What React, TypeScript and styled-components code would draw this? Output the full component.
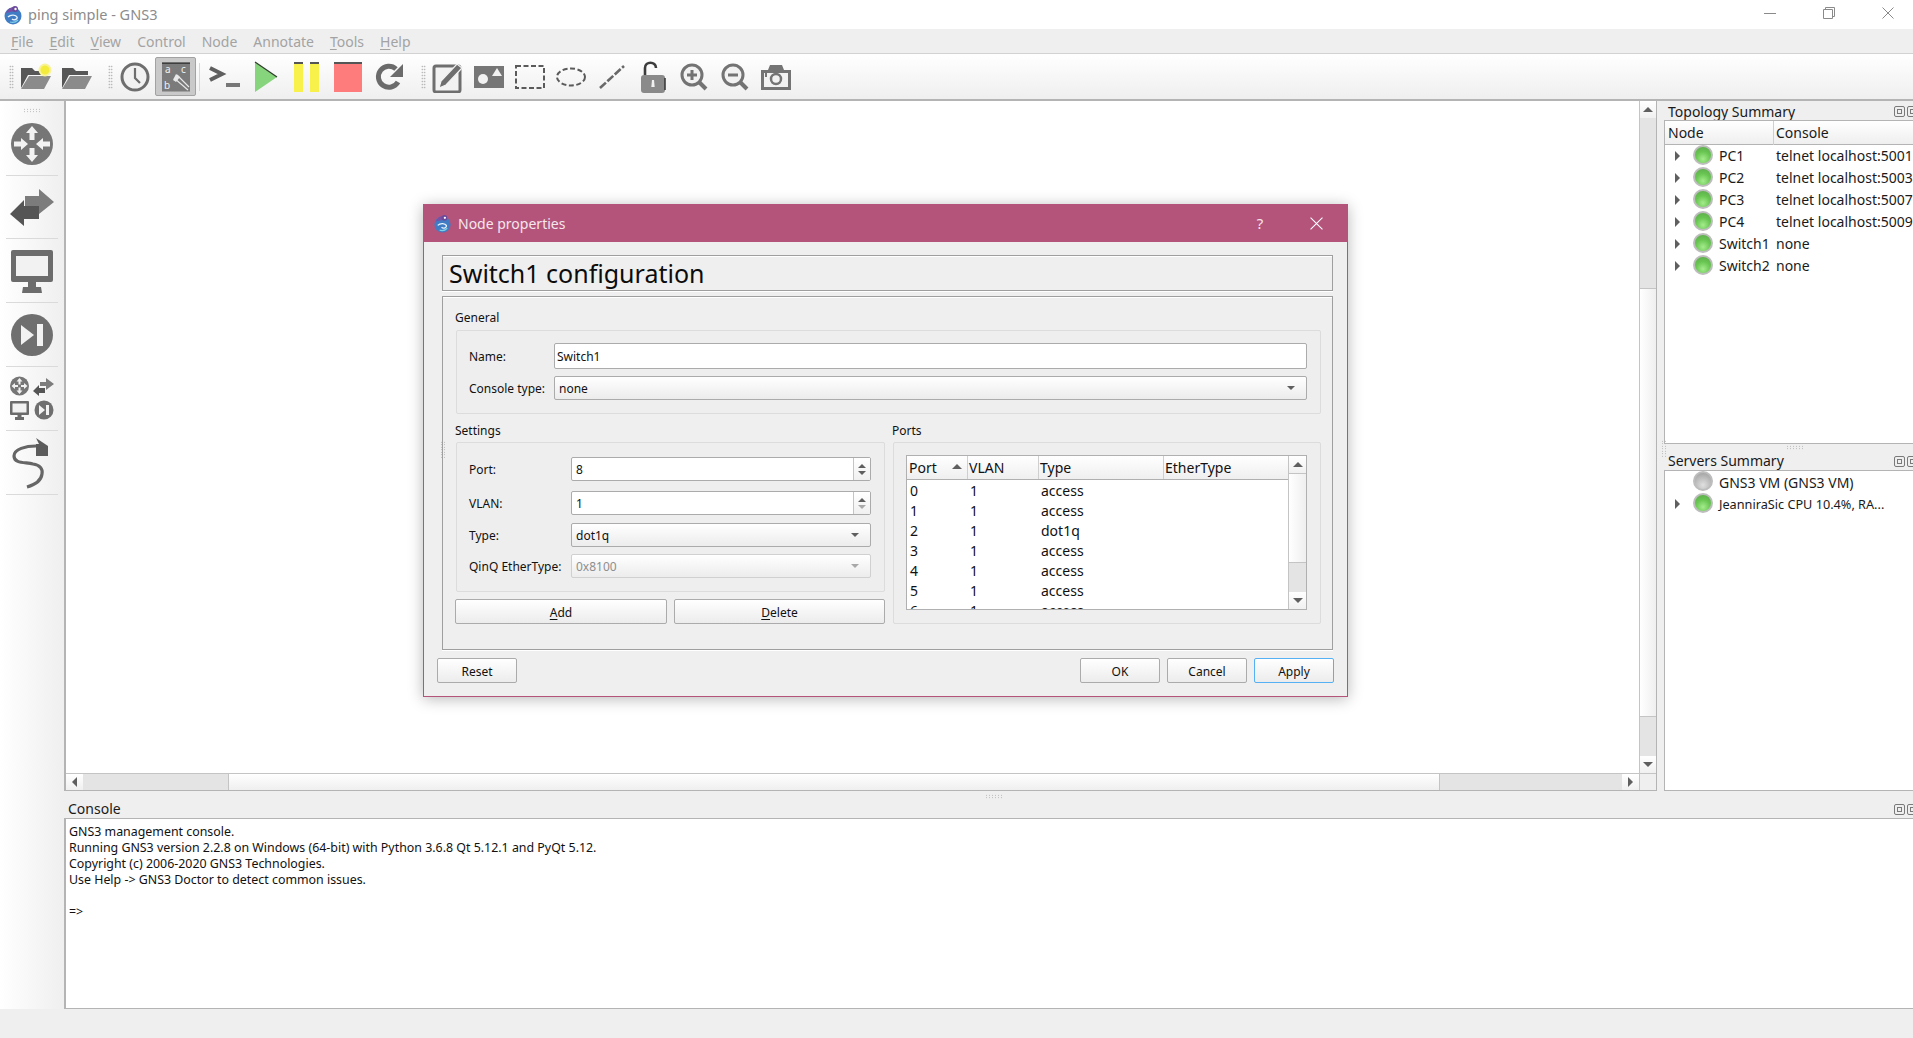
import React from 'react';
import styled, { createGlobalStyle } from 'styled-components';

const UI_FONT = '"Noto Sans", "Open Sans", sans-serif';
const DLG_FONT = '"Noto Sans", "Liberation Sans", sans-serif';
const LINE = '#b4b4b4';

const GlobalStyle = createGlobalStyle`
  html, body { margin: 0; padding: 0; background: #efefef; overflow: hidden; }
  * { box-sizing: border-box; }
`;

const Win = styled.div`
  position: relative;
  width: 1913px;
  height: 1038px;
  overflow: hidden;
  display: flex;
  flex-direction: column;
  background: #efefef;
  font-family: ${UI_FONT};
  color: #1a1a1a;
`;

const TitleBar = styled.div`
  height: 29px;
  background: #fff;
  display: flex;
  align-items: center;
  padding-left: 3px;
  color: #8c8c8c;
  font-size: 14.5px;
`;
const TitleText = styled.span`
  margin-left: 5px;
  margin-top: -1px;
  flex: 1;
`;
const WinBtns = styled.div`
  display: flex;
  margin-right: -4px;
`;
const WinBtn = styled.div`
  width: 59px;
  height: 29px;
  display: flex;
  align-items: center;
  justify-content: center;
  margin-top: -4px;
`;

const MenuBar = styled.div`
  height: 25px;
  background: #efefef;
  border-bottom: 1px solid #d2d2d2;
  display: flex;
  align-items: center;
  gap: 16px;
  padding-left: 11px;
  font-size: 14px;
  color: #a3a3a3;
  u { text-decoration-thickness: 1px; text-underline-offset: 2px; }
`;

const ToolBar = styled.div`
  height: 47px;
  background: linear-gradient(#ffffff, #efefef);
  border-bottom: 2px solid ${LINE};
  display: flex;
  align-items: center;
`;
const Grip = styled.div<{ $ml: number }>`
  width: 5px;
  height: 24px;
  margin-left: ${p => p.$ml}px;
  margin-right: 1px;
  background-image: radial-gradient(#a8a8a8 0.6px, transparent 0.9px);
  background-size: 2.5px 3px;
`;
const ToolBtn = styled.div<{ $active?: boolean }>`
  width: 41px;
  height: 39px;
  display: flex;
  align-items: center;
  justify-content: center;
  border-radius: 2px;
  ${p => p.$active && `background: #c9c9c9; border: 1px solid #a2a2a2;`}
`;
const ToolSep = styled.div`
  width: 1px;
  height: 28px;
  margin: 0 4px 0 3px;
  background: #d8d8d8;
`;

const Main = styled.div`
  height: 908px;
  display: flex;
`;
const SideBar = styled.div`
  width: 64px;
  background: linear-gradient(90deg, #ffffff, #efefef);
  display: flex;
  flex-direction: column;
  align-items: center;
  padding-top: 7px;
`;
const SideGrip = styled.div`
  width: 18px;
  height: 5px;
  background-image: radial-gradient(#b0b0b0 0.6px, transparent 0.9px);
  background-size: 3px 2.5px;
`;
const SideBtn = styled.div<{ $h: number }>`
  width: 52px;
  height: ${p => p.$h}px;
  display: flex;
  align-items: center;
  justify-content: center;
  border-bottom: 1px solid #dadada;
`;

const Center = styled.div`
  flex: 1;
  display: flex;
  flex-direction: column;
  min-width: 0;
`;
const TopArea = styled.div`
  height: 690px;
  display: flex;
`;
const View = styled.div`
  width: 1593px;
  border-left: 2px solid ${LINE};
  border-bottom: 1px solid ${LINE};
  border-right: 1px solid ${LINE};
  display: grid;
  grid-template-columns: 1fr 17px;
  grid-template-rows: 1fr 17px;
  background: #fff;
`;
const Canvas = styled.div`
  background: #fff;
`;
const VScroll = styled.div`
  display: flex;
  flex-direction: column;
  border-left: 1px solid #c4c4c4;
  background: #e4e4e4;
`;
const ArrowBtn = styled.div<{ $h?: boolean }>`
  flex: none;
  ${p => (p.$h ? 'width: 17px; height: 100%;' : 'height: 17px; width: 100%;')}
  background: linear-gradient(#ffffff, #f0f0f0);
  display: flex;
  align-items: center;
  justify-content: center;
`;
const Tri = styled.div<{ $dir: 'up' | 'down' | 'left' | 'right'; $c?: string; $s?: number }>`
  width: 0;
  height: 0;
  ${p => {
    const c = p.$c ?? '#5f5f5f';
    const s = p.$s ?? 5;
    if (p.$dir === 'up') return `border-left:${s}px solid transparent;border-right:${s}px solid transparent;border-bottom:${s}px solid ${c};`;
    if (p.$dir === 'down') return `border-left:${s}px solid transparent;border-right:${s}px solid transparent;border-top:${s}px solid ${c};`;
    if (p.$dir === 'left') return `border-top:${s}px solid transparent;border-bottom:${s}px solid transparent;border-right:${s}px solid ${c};`;
    return `border-top:${s}px solid transparent;border-bottom:${s}px solid transparent;border-left:${s}px solid ${c};`;
  }}
`;
const VThumb = styled.div<{ $h: number }>`
  flex: none;
  height: ${p => p.$h}px;
  background: linear-gradient(90deg, #ffffff, #efefef);
  border-top: 1px solid #c4c4c4;
  border-bottom: 1px solid #c4c4c4;
`;
const VGap = styled.div<{ $h?: number }>`
  ${p => (p.$h ? `height: ${p.$h}px; flex: none;` : 'flex: 1;')}
`;
const HScroll = styled.div`
  display: flex;
  border-top: 1px solid #c4c4c4;
  background: #e4e4e4;
`;
const HGap = styled.div<{ $w?: number }>`
  ${p => (p.$w ? `width: ${p.$w}px; flex: none;` : 'flex: 1;')}
`;
const HThumb = styled.div`
  width: 1212px;
  flex: none;
  background: linear-gradient(#ffffff, #efefef);
  border-left: 1px solid #c4c4c4;
  border-right: 1px solid #c4c4c4;
`;
const Corner = styled.div`
  background: #efefef;
  border-left: 1px solid #c4c4c4;
  border-top: 1px solid #c4c4c4;
`;

const RightDock = styled.div`
  width: 249px;
  margin-left: 7px;
  flex: none;
  display: flex;
  flex-direction: column;
`;
const DockTitle = styled.div<{ $h: number; $lh?: number }>`
  height: ${p => p.$h}px;
  display: flex;
  align-items: flex-end;
  justify-content: space-between;
  padding-left: 4px;
  font-size: 14px;
  line-height: ${p => p.$lh ?? 19}px;
  white-space: nowrap;
`;
const DockBtns = styled.div`
  display: flex;
  gap: 2px;
  margin-bottom: 3px;
  margin-right: -1px;
  width: 20px;
  flex: none;
  overflow: hidden;
`;
const DockBtn = styled.div`
  width: 11px;
  height: 11px;
  flex: none;
  border: 1px solid #7a7a7a;
  border-radius: 2px;
  display: flex;
  align-items: center;
  justify-content: center;
`;
const DockInner = styled.div`
  width: 5px;
  height: 5px;
  border: 1px solid #7a7a7a;
`;
const TreePanel = styled.div<{ $h: number }>`
  height: ${p => p.$h}px;
  flex: none;
  background: #fff;
  border-left: 1px solid ${LINE};
  border-top: 1px solid ${LINE};
  border-bottom: 1px solid ${LINE};
`;
const TreeHead = styled.div`
  height: 24px;
  display: grid;
  grid-template-columns: 108px 1fr;
  background: linear-gradient(#ffffff, #efefef);
  border-bottom: 1px solid ${LINE};
  font-size: 14px;
`;
const HeadCell = styled.div<{ $pl: number }>`
  padding-left: ${p => p.$pl}px;
  line-height: 24px;
  & + & { border-left: 1px solid #cfcfcf; }
`;
const TreeRow = styled.div<{ $small?: boolean }>`
  height: 22px;
  display: flex;
  align-items: center;
  white-space: nowrap;
  font-size: ${p => (p.$small ? 12.7 : 14)}px;
`;
const ArrowSlot = styled.div`
  width: 28px;
  padding-left: 10px;
  flex: none;
`;
const Led = styled.div<{ $on: boolean }>`
  width: 20px;
  height: 20px;
  border-radius: 50%;
  flex: none;
  margin-right: 6px;
  margin-top: -2px;
  border: 2px solid #bdbdbd;
  background: ${p =>
    p.$on
      ? 'radial-gradient(circle at 50% 75%, #a4ec8c 0%, #69c652 50%, #5aa84a 100%)'
      : 'radial-gradient(circle at 50% 75%, #e0e0e0 0%, #bdbdbd 50%, #9a9a9a 100%)'};
`;
const NodeName = styled.span`
  width: 57px;
  flex: none;
`;
const SplitGrip = styled.div<{ $x: number; $y: number; $v?: boolean }>`
  position: absolute;
  left: ${p => p.$x}px;
  top: ${p => p.$y}px;
  width: ${p => (p.$v ? 5 : 17)}px;
  height: ${p => (p.$v ? 17 : 5)}px;
  background-image: radial-gradient(#b0b0b0 0.6px, transparent 0.9px);
  background-size: 3px 2.5px;
`;

const ConsoleDock = styled.div`
  flex: 1;
  display: flex;
  flex-direction: column;
  min-height: 0;
`;
const ConsoleTitle = styled.div`
  height: 27px;
  flex: none;
  display: flex;
  align-items: flex-end;
  justify-content: space-between;
  padding-left: 4px;
  font-size: 14px;
  line-height: 19px;
`;
const ConsoleBody = styled.div`
  flex: 1;
  background: #fff;
  border-left: 2px solid ${LINE};
  border-top: 1px solid ${LINE};
  border-bottom: 1px solid ${LINE};
  padding: 5px 3px;
  font-family: ${DLG_FONT};
  font-size: 12.4px;
  line-height: 16px;
  white-space: pre;
  color: #111;
`;

/* Dialog */
const Dialog = styled.div`
  position: absolute;
  left: 423px;
  top: 204px;
  width: 925px;
  height: 493px;
  background: #efefef;
  border: 1px solid #b4547b;
  border-top: none;
  box-shadow: 0 2px 14px rgba(0, 0, 0, 0.28);
  font-family: ${DLG_FONT};
  font-size: 12px;
  color: #111;
  display: flex;
  flex-direction: column;
`;
const DlgTitle = styled.div`
  height: 38px;
  flex: none;
  background: #b4547b;
  color: #f4e6ec;
  display: flex;
  align-items: center;
  padding-left: 9px;
  font-family: ${UI_FONT};
  font-size: 14px;
`;
const DlgTitleText = styled.span`
  flex: 1;
  margin-left: 6px;
`;
const DlgHelp = styled.span`
  width: 12px;
  font-size: 15px;
  margin-right: 44px;
  text-align: center;
`;
const DlgClose = styled.div`
  margin-right: 24px;
  display: flex;
`;
const DlgContent = styled.div`
  flex: 1;
  padding: 13px 14px 0 18px;
  display: flex;
  flex-direction: column;
  position: relative;
`;
const HeaderFrame = styled.div`
  height: 36px;
  flex: none;
  border: 1px solid #9f9f9f;
  box-shadow: inset 0 1px 0 #fff, 0 1px 0 #fff;
  padding-left: 6px;
  font-size: 25px;
  line-height: 34px;
  color: #0c0c0c;
`;
const BodyFrame = styled.div`
  height: 354px;
  flex: none;
  margin-top: 5px;
  border: 1px solid #9f9f9f;
  box-shadow: inset 0 1px 0 #fff, 0 1px 0 #fff;
  padding: 13px 11px 0 12px;
`;
const SectionLabel = styled.div`
  height: 16px;
  line-height: 16px;
`;
const Group = styled.div<{ $h: number; $pad: string; $mt?: number }>`
  height: ${p => p.$h}px;
  margin-left: 1px;
  margin-top: ${p => p.$mt ?? 3}px;
  padding: ${p => p.$pad};
  background: #eeeeee;
  border: 1px solid #dcdcdc;
  border-radius: 2px;
`;
const FormRow = styled.div<{ $labelW: number; $h: number; $mt?: number }>`
  display: grid;
  grid-template-columns: ${p => p.$labelW}px 1fr;
  align-items: center;
  height: ${p => p.$h}px;
  margin-top: ${p => p.$mt ?? 0}px;
`;
const TextField = styled.div`
  height: 100%;
  background: #fff;
  border: 1px solid #ababab;
  border-radius: 2px;
  padding-left: 2px;
  display: flex;
  align-items: center;
`;
const Combo = styled.div<{ $disabled?: boolean }>`
  height: 100%;
  background: linear-gradient(#ffffff, #ececec);
  border: 1px solid ${p => (p.$disabled ? '#d0d0d0' : '#ababab')};
  border-radius: 2px;
  padding: 0 11px 0 4px;
  display: flex;
  align-items: center;
  justify-content: space-between;
  color: ${p => (p.$disabled ? '#8e8e8e' : '#111')};
`;
const SpinField = styled.div`
  height: 100%;
  background: #fff;
  border: 1px solid #ababab;
  border-radius: 2px;
  padding-left: 4px;
  display: flex;
  align-items: center;
  justify-content: space-between;
`;
const SpinBtns = styled.div`
  width: 17px;
  height: 100%;
  border-left: 1px solid #c4c4c4;
  display: flex;
  flex-direction: column;
  align-items: center;
  justify-content: center;
  gap: 3px;
  background: linear-gradient(#ffffff, #f0f0f0);
`;
const SettingsGrid = styled.div`
  display: grid;
  grid-template-columns: 430px 429px;
  column-gap: 7px;
  margin-top: 9px;
`;
const ButtonRow = styled.div`
  display: grid;
  grid-template-columns: 212px 211px;
  column-gap: 7px;
  margin-top: 7px;
`;
const PushBtn = styled.div<{ $w?: number; $focus?: boolean }>`
  height: 25px;
  padding-top: 1px;
  ${p => p.$w && `width: ${p.$w}px;`}
  background: linear-gradient(#ffffff, #ececec);
  border: 1px solid ${p => (p.$focus ? '#56b0f4' : '#ababab')};
  border-radius: 2px;
  display: flex;
  align-items: center;
  justify-content: center;
  u { text-decoration-thickness: 1px; text-underline-offset: 2px; }
`;
const Footer = styled.div`
  margin: 8px -1px 0 -5px;
  display: flex;
  gap: 7px;
`;
const FooterSpace = styled.div`
  flex: 1;
`;

const PortsTable = styled.div`
  height: 155px;
  display: grid;
  grid-template-columns: 1fr 18px;
  border: 1px solid #b0b0b0;
  background: #fff;
  overflow: hidden;
  font-family: ${UI_FONT};
  font-size: 14px;
`;
const PortsMain = styled.div`
  overflow: hidden;
  min-width: 0;
`;
const PortsRowGrid = styled.div<{ $head?: boolean }>`
  display: grid;
  grid-template-columns: 60px 71px 125px 1fr;
  height: ${p => (p.$head ? 24 : 20)}px;
  line-height: ${p => (p.$head ? 23 : 21)}px;
  ${p => p.$head && `background: linear-gradient(#ffffff, #efefef); border-bottom: 1px solid #b0b0b0;`}
`;
const PortsHeadCell = styled.div`
  padding-left: 2px;
  position: relative;
  & + & { border-left: 1px solid #cfcfcf; padding-left: 1px; }
`;
const SortMark = styled.div`
  position: absolute;
  right: 5px;
  top: 8px;
`;
const PortsCell = styled.div<{ $pl: number }>`
  padding-left: ${p => p.$pl}px;
`;
const TableScroll = styled.div`
  display: flex;
  flex-direction: column;
  border-left: 1px solid #c4c4c4;
  background: #e4e4e4;
`;

/* icons */
const G = '#6e6e6e';

const Logo: React.FC<{ s: number }> = ({ s }) => (
  <svg width={s} height={s} viewBox="0 0 20 20">
    <circle cx="10" cy="11" r="8.5" fill="#3f7cc4" />
    <path d="M3 8c2-6 9-8 12-3" fill="#7a4fa5" />
    <circle cx="12" cy="4" r="3" fill="#6b4a9c" />
    <circle cx="12.5" cy="4" r="1.2" fill="#fff" />
    <path d="M5 12c3-3 8-2 9 0s-3 4-5 2" fill="none" stroke="#e8f2fb" strokeWidth="1.4" />
    <path d="M7 17c3 1 6 0 8-2" fill="none" stroke="#7fd0e8" strokeWidth="1.2" />
  </svg>
);

const Folder: React.FC<{ isNew?: boolean }> = ({ isNew }) => (
  <svg width="32" height="28" viewBox="0 0 32 28">
    <path d="M1 25V5h11l3 3h12v4H8L1 25z" fill="#575757" />
    <path d="M9 13h22l-7 13H1z" fill="#8b8b8b" />
    {isNew && <circle cx="25" cy="7" r="5.5" fill="#f4ec3c" stroke="#f8f39a" strokeWidth="2" />}
  </svg>
);
const Clock = () => (
  <svg width="30" height="30" viewBox="0 0 30 30">
    <circle cx="15" cy="15" r="13" fill="#f2f2f2" stroke={G} strokeWidth="3" />
    <path d="M15 6v10l5 5" fill="none" stroke={G} strokeWidth="2.2" />
  </svg>
);
const Abc = () => (
  <svg width="30" height="30" viewBox="0 0 30 30">
    <rect width="28" height="29" x="1" y="0.5" fill="#7b7b7b" />
    <rect width="28" height="1.5" x="1" y="0.5" fill="#3e3e3e" />
    <text x="4" y="11" fontSize="10" fill="#f0f0f0" fontFamily="Noto Sans">a</text>
    <text x="20" y="11" fontSize="10" fill="#f0f0f0" fontFamily="Noto Sans">c</text>
    <text x="3" y="27" fontSize="10" fill="#f0f0f0" fontFamily="Noto Sans">b</text>
    <path d="M13 16l14 12M16 13l12 12" stroke="#e8e8e8" strokeWidth="1.2" fill="none" />
    <path d="M12 18l3-6 4 3-4 5z" fill="#e8e8e8" />
  </svg>
);
const Terminal = () => (
  <svg width="32" height="28" viewBox="0 0 32 28">
    <path d="M1 5l12 6L1 17" fill="none" stroke="#5f5f5f" strokeWidth="4" />
    <rect x="17" y="20" width="14" height="4" fill="#777" />
  </svg>
);
const Play = () => (
  <svg width="24" height="32" viewBox="0 0 24 32">
    <path d="M1 1l22 15L1 31z" fill="#86d57c" />
    <path d="M1 1l22 15" stroke="#2f3d2c" strokeWidth="1.2" fill="none" />
  </svg>
);
const Pause = () => (
  <svg width="26" height="30" viewBox="0 0 26 30">
    <rect x="0" y="0" width="9" height="30" fill="#f8f14c" />
    <rect x="16" y="0" width="9" height="30" fill="#f8f14c" />
    <rect x="0" y="0" width="9" height="2" fill="#555" />
    <rect x="16" y="0" width="9" height="2" fill="#555" />
  </svg>
);
const Stop = () => (
  <svg width="28" height="30" viewBox="0 0 28 30">
    <rect width="28" height="30" fill="#ff7c7c" />
    <rect width="28" height="2" fill="#555" />
  </svg>
);
const Reload = () => (
  <svg width="30" height="30" viewBox="0 0 30 30">
    <path d="M24 20a10.500 10.500 0 1 1-2-13" fill="none" stroke="#6b6b6b" strokeWidth="5" />
    <path d="M29 2v13H16z" fill="#6b6b6b" />
  </svg>
);
const Note = () => (
  <svg width="32" height="32" viewBox="0 0 32 32">
    <rect x="2" y="5" width="26" height="26" rx="2" fill="#f2f2f2" stroke={G} strokeWidth="3" />
    <path d="M9 20L25 3l5 4-16 17-7 3z" fill={G} stroke="#f2f2f2" strokeWidth="1.2" />
  </svg>
);
const ImageIcon = () => (
  <svg width="30" height="24" viewBox="0 0 30 24">
    <rect width="30" height="22" y="1" fill="#767676" />
    <circle cx="9" cy="14" r="5" fill="#f2f2f2" />
    <path d="M18 11l5-8 5 8z" fill="#f2f2f2" />
  </svg>
);
const DashRect = () => (
  <svg width="30" height="24" viewBox="0 0 30 24">
    <rect x="1" y="1" width="28" height="22" fill="none" stroke="#5a5a5a" strokeWidth="2" strokeDasharray="5 2.500" />
  </svg>
);
const DashEllipse = () => (
  <svg width="30" height="20" viewBox="0 0 30 20">
    <ellipse cx="15" cy="10" rx="14" ry="8.500" fill="none" stroke="#5a5a5a" strokeWidth="2" strokeDasharray="5 2.500" />
  </svg>
);
const DashLine = () => (
  <svg width="26" height="24" viewBox="0 0 26 24">
    <path d="M1 23L25 1" fill="none" stroke="#686868" strokeWidth="2.600" strokeDasharray="8 2" />
  </svg>
);
const Lock = () => (
  <svg width="26" height="32" viewBox="0 0 26 32">
    <path d="M5 14V7c0-7 11-7 11 0" fill="none" stroke="#3c3c3c" strokeWidth="2.600" />
    <rect x="1" y="14" width="24" height="18" rx="3" fill="#8a8a8a" />
    <path d="M25 17v12" stroke="#333" strokeWidth="1.500" />
    <path d="M12 19h2l.7 7h-3.400z" fill="#f0f0f0" />
  </svg>
);
const Zoom: React.FC<{ plus?: boolean }> = ({ plus }) => (
  <svg width="28" height="28" viewBox="0 0 28 28">
    <circle cx="12" cy="12" r="10" fill="#f2f2f2" stroke="#737373" strokeWidth="3" />
    <path d="M19 19l7 7" stroke="#737373" strokeWidth="4" />
    <path d={plus ? 'M7 12h10M12 7v10' : 'M7 12h10'} stroke="#737373" strokeWidth="3" />
  </svg>
);
const Camera = () => (
  <svg width="32" height="28" viewBox="0 0 32 28">
    <path d="M1 7h7l2-5h12l2 5h7v20H1z" fill="#747474" />
    <rect x="4" y="10" width="24" height="14" fill="#f2f2f2" />
    <circle cx="16" cy="16" r="5" fill="#f2f2f2" stroke="#747474" strokeWidth="2.500" />
    <rect x="5" y="10" width="2" height="4" fill="#747474" />
  </svg>
);

const RouterIcon: React.FC<{ s: number }> = ({ s }) => (
  <svg width={s} height={s} viewBox="0 0 42 42">
    <circle cx="21" cy="21" r="21" fill="#767676" />
    <g fill="#f2f2f2">
      <path d="M21 3l6 7h-3.500v7h-5v-7H15z" />
      <path d="M21 39l6-7h-3.500v-7h-5v7H15z" />
      <path d="M17 21l-7-6v3.500H3v5h7V27z" />
      <path d="M25 21l7-6v3.500h7v5h-7V27z" />
    </g>
  </svg>
);
const SwitchIcon: React.FC<{ w: number }> = ({ w }) => (
  <svg width={w} height={(w * 37) / 44} viewBox="0 0 44 37">
    <path d="M15 7h14V0l15 13-15 12v-6H15z" fill="#7c7c7c" />
    <path d="M29 17H14v-6L0 25l14 12v-7h15z" fill="#555" />
  </svg>
);
const Monitor: React.FC<{ w: number }> = ({ w }) => (
  <svg width={w} height={w} viewBox="0 0 44 44">
    <rect x="1" y="1" width="42" height="32" rx="2" fill="#6c6c6c" />
    <rect x="6" y="7" width="32" height="20" fill="#f2f2f2" />
    <rect x="18" y="33" width="8" height="5" fill="#6c6c6c" />
    <path d="M13 38h18l1 6H12z" fill="#6c6c6c" />
  </svg>
);
const SkipIcon: React.FC<{ s: number }> = ({ s }) => (
  <svg width={s} height={s} viewBox="0 0 42 42">
    <circle cx="21" cy="21" r="21" fill="#6f6f6f" />
    <path d="M10 11l13 10-13 10z" fill="#f2f2f2" />
    <rect x="26" y="10" width="6" height="22" fill="#f2f2f2" />
  </svg>
);
const AllDevices = () => (
  <svg width="46" height="46" viewBox="0 0 46 46">
    <circle cx="10.500" cy="10" r="9.500" fill="#767676" />
    <path d="M10.500 2l3 3.500h-2v3h-2v-3h-2zM10.500 18l3-3.500h-2v-3h-2v3h-2zM2.500 10l3.500-3v2h3v2H6v2zM18.500 10L15 7v2h-3v2h3v2z" fill="#f2f2f2" />
    <path d="M31 6h6V2l8 6-8 6v-4h-6z" fill="#7c7c7c" />
    <path d="M36 12h-6V9l-6 6 6 5v-3h6z" fill="#555" />
    <rect x="1" y="25" width="19" height="14" rx="1" fill="#6c6c6c" />
    <rect x="3.500" y="27.500" width="14" height="9" fill="#f2f2f2" />
    <path d="M8.500 39h4v2h2.500v3H6v-3h2.500z" fill="#6c6c6c" />
    <circle cx="35" cy="34" r="9.500" fill="#6f6f6f" />
    <path d="M30 29l6 5-6 5z" fill="#f2f2f2" />
    <rect x="37" y="29" width="3" height="10" fill="#f2f2f2" />
  </svg>
);
const Cable = () => (
  <svg width="40" height="52" viewBox="0 0 40 52">
    <path d="M24 9C14 9 2 12 2 19c0 8 12 6 19 8 7 1 10 5 9 10-1 8-8 11-15 13" fill="none" stroke="#666" strokeWidth="3.200" />
    <path d="M24 7h3l-3-6 12 8v10H24z" fill="#5c5c5c" />
  </svg>
);
const CloseX: React.FC<{ c: string; s: number }> = ({ c, s }) => (
  <svg width={s} height={s} viewBox="0 0 12 12">
    <path d="M0.500 0.500l11 11M11.500 0.500l-11 11" stroke={c} strokeWidth="1" fill="none" />
  </svg>
);

const DockButtons = () => (
  <DockBtns>
    <DockBtn><DockInner /></DockBtn>
    <DockBtn><DockInner /></DockBtn>
  </DockBtns>
);

const nodes = [
  ['PC1', 'telnet localhost:5001'],
  ['PC2', 'telnet localhost:5003'],
  ['PC3', 'telnet localhost:5007'],
  ['PC4', 'telnet localhost:5009'],
  ['Switch1', 'none'],
  ['Switch2', 'none'],
];
const ports = [
  ['0', 'access'],
  ['1', 'access'],
  ['2', 'dot1q'],
  ['3', 'access'],
  ['4', 'access'],
  ['5', 'access'],
  ['6', 'access'],
];

const App: React.FC = () => (
  <Win>
    <GlobalStyle />
    <TitleBar>
      <Logo s={20} />
      <TitleText>ping simple - GNS3</TitleText>
      <WinBtns>
        <WinBtn><svg width="12" height="12"><path d="M0 6.500h12" stroke="#8a8a8a" /></svg></WinBtn>
        <WinBtn><svg width="12" height="12"><path d="M0.500 2.500h9v9h-9zM2.500 2.500v-2h9v9h-2" stroke="#8a8a8a" fill="none" /></svg></WinBtn>
        <WinBtn><CloseX c="#8a8a8a" s={12} /></WinBtn>
      </WinBtns>
    </TitleBar>
    <MenuBar>
      <span><u>F</u>ile</span>
      <span><u>E</u>dit</span>
      <span><u>V</u>iew</span>
      <span>Control</span>
      <span>Node</span>
      <span>Annotate</span>
      <span><u>T</u>ools</span>
      <span><u>H</u>elp</span>
    </MenuBar>
    <ToolBar>
      <Grip $ml={9} />
      <ToolBtn><Folder isNew /></ToolBtn>
      <ToolBtn><Folder /></ToolBtn>
      <Grip $ml={11} />
      <ToolBtn><Clock /></ToolBtn>
      <ToolBtn $active><Abc /></ToolBtn>
      <ToolSep />
      <ToolBtn><Terminal /></ToolBtn>
      <ToolBtn><Play /></ToolBtn>
      <ToolBtn><Pause /></ToolBtn>
      <ToolBtn><Stop /></ToolBtn>
      <ToolBtn><Reload /></ToolBtn>
      <Grip $ml={12} />
      <ToolBtn><Note /></ToolBtn>
      <ToolBtn><ImageIcon /></ToolBtn>
      <ToolBtn><DashRect /></ToolBtn>
      <ToolBtn><DashEllipse /></ToolBtn>
      <ToolBtn><DashLine /></ToolBtn>
      <ToolBtn><Lock /></ToolBtn>
      <ToolBtn><Zoom plus /></ToolBtn>
      <ToolBtn><Zoom /></ToolBtn>
      <ToolBtn><Camera /></ToolBtn>
    </ToolBar>
    <Main>
      <SideBar>
        <SideGrip />
        <SideBtn $h={63}><RouterIcon s={42} /></SideBtn>
        <SideBtn $h={63}><SwitchIcon w={44} /></SideBtn>
        <SideBtn $h={64}><Monitor w={44} /></SideBtn>
        <SideBtn $h={64}><SkipIcon s={42} /></SideBtn>
        <SideBtn $h={64}><AllDevices /></SideBtn>
        <SideBtn $h={64}><Cable /></SideBtn>
      </SideBar>
      <Center>
        <TopArea>
          <View>
            <Canvas />
            <VScroll>
              <ArrowBtn><Tri $dir="up" /></ArrowBtn>
              <VGap $h={170} />
              <VThumb $h={429} />
              <VGap />
              <ArrowBtn><Tri $dir="down" /></ArrowBtn>
            </VScroll>
            <HScroll>
              <ArrowBtn $h><Tri $dir="left" /></ArrowBtn>
              <HGap $w={145} />
              <HThumb />
              <HGap />
              <ArrowBtn $h><Tri $dir="right" /></ArrowBtn>
            </HScroll>
            <Corner />
          </View>
          <RightDock>
            <DockTitle $h={19} $lh={17}>
              Topology Summary
              <DockButtons />
            </DockTitle>
            <TreePanel $h={324}>
              <TreeHead>
                <HeadCell $pl={3}>Node</HeadCell>
                <HeadCell $pl={2}>Console</HeadCell>
              </TreeHead>
              {nodes.map(([name, con]) => (
                <TreeRow key={name}>
                  <ArrowSlot><Tri $dir="right" $s={5} /></ArrowSlot>
                  <Led $on />
                  <NodeName>{name}</NodeName>
                  {con}
                </TreeRow>
              ))}
            </TreePanel>
            <DockTitle $h={27}>
              Servers Summary
              <DockButtons />
            </DockTitle>
            <TreePanel $h={321}>
              <TreeRow>
                <ArrowSlot />
                <Led $on={false} />
                GNS3 VM (GNS3 VM)
              </TreeRow>
              <TreeRow $small>
                <ArrowSlot><Tri $dir="right" $s={5} /></ArrowSlot>
                <Led $on />
                JeanniraSic CPU 10.4%, RA...
              </TreeRow>
            </TreePanel>
          </RightDock>
          <SplitGrip $x={1661} $y={440} $v />
          <SplitGrip $x={1786} $y={445} />
          <SplitGrip $x={985} $y={794} />
        </TopArea>
        <ConsoleDock>
          <ConsoleTitle>
            Console
            <DockButtons />
          </ConsoleTitle>
          <ConsoleBody>
            {`GNS3 management console.
Running GNS3 version 2.2.8 on Windows (64-bit) with Python 3.6.8 Qt 5.12.1 and PyQt 5.12.
Copyright (c) 2006-2020 GNS3 Technologies.
Use Help -> GNS3 Doctor to detect common issues.

=>`}
          </ConsoleBody>
        </ConsoleDock>
      </Center>
    </Main>

    <Dialog>
      <DlgTitle>
        <Logo s={19} />
        <DlgTitleText>Node properties</DlgTitleText>
        <DlgHelp>?</DlgHelp>
        <DlgClose><CloseX c="#fff" s={13} /></DlgClose>
      </DlgTitle>
      <DlgContent>
        <SplitGrip $x={16} $y={199} $v />
        <HeaderFrame>Switch1 configuration</HeaderFrame>
        <BodyFrame>
          <SectionLabel>General</SectionLabel>
          <Group $h={84} $mt={4} $pad="12px 13px 0 12px">
            <FormRow $labelW={85} $h={26}>
              <span>Name:</span>
              <TextField>Switch1</TextField>
            </FormRow>
            <FormRow $labelW={85} $h={24} $mt={7}>
              <span>Console type:</span>
              <Combo>none<Tri $dir="down" $s={4} /></Combo>
            </FormRow>
          </Group>
          <SettingsGrid>
            <div>
              <SectionLabel>Settings</SectionLabel>
              <Group $h={150} $pad="14px 13px 0 12px">
                <FormRow $labelW={102} $h={24}>
                  <span>Port:</span>
                  <SpinField>8
                    <SpinBtns><Tri $dir="up" $s={4} /><Tri $dir="down" $s={4} /></SpinBtns>
                  </SpinField>
                </FormRow>
                <FormRow $labelW={102} $h={24} $mt={10}>
                  <span>VLAN:</span>
                  <SpinField>1
                    <SpinBtns><Tri $dir="up" $s={4} /><Tri $dir="down" $s={4} $c="#aaa" /></SpinBtns>
                  </SpinField>
                </FormRow>
                <FormRow $labelW={102} $h={24} $mt={8}>
                  <span>Type:</span>
                  <Combo>dot1q<Tri $dir="down" $s={4} /></Combo>
                </FormRow>
                <FormRow $labelW={102} $h={24} $mt={7}>
                  <span>QinQ EtherType:</span>
                  <Combo $disabled>0x8100<Tri $dir="down" $s={4} $c="#a8a8a8" /></Combo>
                </FormRow>
              </Group>
              <ButtonRow>
                <PushBtn><span><u>A</u>dd</span></PushBtn>
                <PushBtn><span><u>D</u>elete</span></PushBtn>
              </ButtonRow>
            </div>
            <div>
              <SectionLabel>Ports</SectionLabel>
              <Group $h={182} $pad="12px 13px 0 12px">
                <PortsTable>
                  <PortsMain>
                    <PortsRowGrid $head>
                      <PortsHeadCell>Port<SortMark><Tri $dir="up" $s={5} /></SortMark></PortsHeadCell>
                      <PortsHeadCell>VLAN</PortsHeadCell>
                      <PortsHeadCell>Type</PortsHeadCell>
                      <PortsHeadCell>EtherType</PortsHeadCell>
                    </PortsRowGrid>
                    {ports.map(([port, type]) => (
                      <PortsRowGrid key={port}>
                        <PortsCell $pl={3}>{port}</PortsCell>
                        <PortsCell $pl={3}>1</PortsCell>
                        <PortsCell $pl={3}>{type}</PortsCell>
                        <PortsCell $pl={3} />
                      </PortsRowGrid>
                    ))}
                  </PortsMain>
                  <TableScroll>
                    <ArrowBtn><Tri $dir="up" /></ArrowBtn>
                    <VThumb $h={90} />
                    <VGap />
                    <ArrowBtn><Tri $dir="down" /></ArrowBtn>
                  </TableScroll>
                </PortsTable>
              </Group>
            </div>
          </SettingsGrid>
        </BodyFrame>
        <Footer>
          <PushBtn $w={80}>Reset</PushBtn>
          <FooterSpace />
          <PushBtn $w={80}>OK</PushBtn>
          <PushBtn $w={80}>Cancel</PushBtn>
          <PushBtn $w={80} $focus>Apply</PushBtn>
        </Footer>
      </DlgContent>
    </Dialog>
  </Win>
);

export default App;
